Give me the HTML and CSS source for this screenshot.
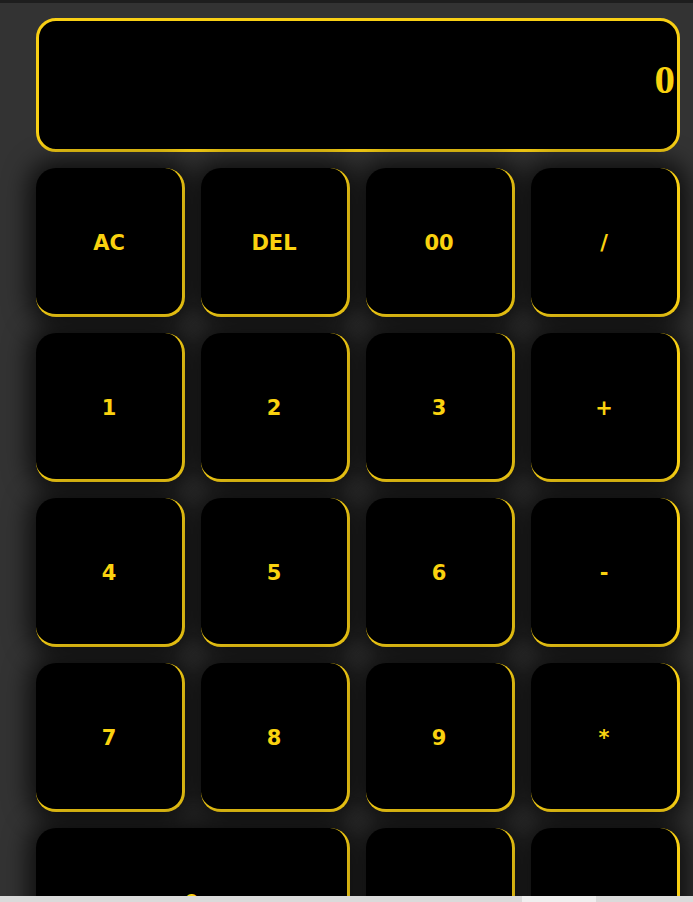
FILE: index.html
```html
<!DOCTYPE html>
<html lang="en">
<head>
<meta charset="utf-8">
<title>Calculator</title>
<link rel="stylesheet" href="styles.css">
</head>
<body>
<div class="topbar"></div>
<main class="calc">
  <div class="display"><span class="value">0</span></div>
  <button class="key">AC</button>
  <button class="key">DEL</button>
  <button class="key">00</button>
  <button class="key">/</button>
  <button class="key">1</button>
  <button class="key">2</button>
  <button class="key">3</button>
  <button class="key">+</button>
  <button class="key">4</button>
  <button class="key">5</button>
  <button class="key">6</button>
  <button class="key">-</button>
  <button class="key">7</button>
  <button class="key">8</button>
  <button class="key">9</button>
  <button class="key">*</button>
  <button class="key wide">0</button>
  <button class="key">.</button>
  <button class="key">=</button>
</main>
<div class="hscroll"><div class="hscroll-thumb"></div></div>
</body>
</html>
```

FILE: styles.css
```css
html, body {
  margin: 0;
  padding: 0;
  background: #333333;
}
body {
  font-family: "DejaVu Sans", Verdana, sans-serif;
}
.topbar {
  height: 3px;
  background: #1e1e1e;
}
.calc {
  display: grid;
  grid-template-columns: repeat(4, 149px);
  grid-template-rows: 134px;
  grid-auto-rows: 149px;
  gap: 16px;
  padding: 15px 0 40px 36px;
}
.display {
  grid-column: 1 / span 4;
  box-sizing: border-box;
  border: 3px solid #f8cf14;
  border-radius: 20px;
  background: #000;
  display: flex;
  align-items: center;
  justify-content: flex-end;
  padding: 0 2px 12px 0;
}
.value {
  font-family: "Liberation Serif", "Times New Roman", serif;
  font-weight: bold;
  font-size: 41px;
  color: #fad20f;
}
.key {
  box-sizing: border-box;
  background: #000;
  border: none;
  border-right: 3px solid #f8cf14;
  border-bottom: 3px solid #f8cf14;
  border-radius: 20px;
  color: #fad20f;
  font-family: "DejaVu Sans", Verdana, sans-serif;
  font-weight: bold;
  font-size: 21px;
  box-shadow: 0 0 24px 8px rgba(0, 0, 0, 0.72);
  padding: 4px 0 0 0;
}
.key.wide {
  grid-column: span 2;
}
.hscroll {
  position: fixed;
  left: 0;
  right: 0;
  bottom: 0;
  height: 6px;
  background: #dadada;
}
.hscroll-thumb {
  margin-left: 522px;
  width: 74px;
  height: 6px;
  background: #efefef;
}
```
